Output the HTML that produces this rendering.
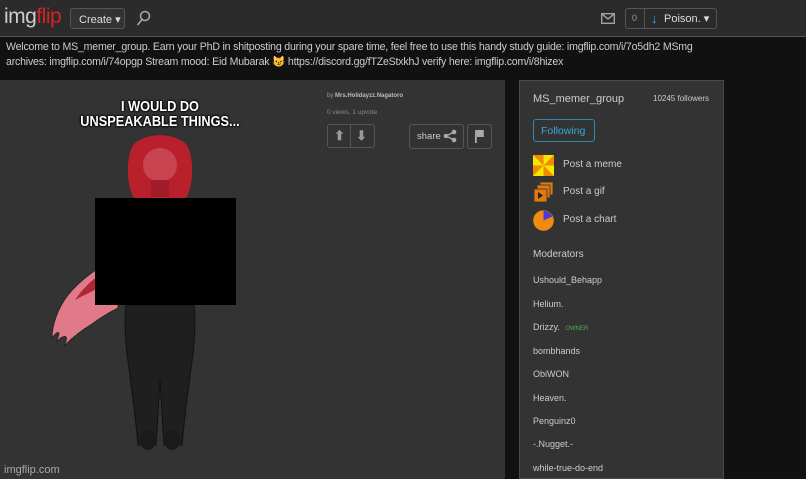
<!DOCTYPE html>
<html><head><meta charset="utf-8"><style>
*{margin:0;padding:0;box-sizing:border-box}
body{width:806px;height:479px;background:#111;font-family:"Liberation Sans",sans-serif;position:relative;overflow:hidden;color:#ddd}
.top{position:absolute;left:0;top:0;width:806px;height:37px;background:#2b2b2b;border-bottom:1px solid #555}
.abs{position:absolute}
.desc{position:absolute;left:6px;top:40px;font-size:10.6px;line-height:15px;color:#ccc;width:720px;letter-spacing:-0.2px}
.main{position:absolute;left:0;top:80px;width:505px;height:399px;background:#333}
.side{position:absolute;left:519px;top:80px;width:205px;height:399px;background:#333;border:1px solid #4a4a4a}
.btn{position:absolute;border:1px solid #555;border-radius:3px}
.mod{position:absolute;left:13px;font-size:9px;color:#ccc}
</style></head><body>
<div class="top">
 <div class="abs" style="left:4px;top:5px;font-size:21px;color:#ccc;letter-spacing:-0.5px">img<span style="color:#d2232a">flip</span></div>
 <div class="btn" style="left:70px;top:8px;width:55px;height:21px;background:#333;font-size:11px;color:#ddd;padding:4px 0 0 8px">Create ▾</div>
 <svg class="abs" style="left:136px;top:10px" width="16" height="17"><circle cx="9" cy="6" r="4.5" fill="none" stroke="#aaa" stroke-width="1.5"/><line x1="6" y1="9.5" x2="1.5" y2="15" stroke="#aaa" stroke-width="1.5"/></svg>
 <svg class="abs" style="left:601px;top:13px" width="14" height="11"><rect x="0.7" y="0.7" width="12.6" height="9.6" fill="none" stroke="#aaa" stroke-width="1.3"/><path d="M1 1 L7 6 L13 1" fill="none" stroke="#aaa" stroke-width="1.3"/></svg>
 <div class="btn" style="left:625px;top:8px;width:92px;height:21px;background:#2b2b2b"></div>
 <div class="abs" style="left:644px;top:8px;width:1px;height:21px;background:#555"></div>
 <div class="abs" style="left:632px;top:13px;font-size:9px;color:#999">0</div>
 <div class="abs" style="left:651px;top:11px;font-size:13px;color:#3ba3e0;font-weight:bold">↓</div>
 <div class="abs" style="left:664px;top:12px;font-size:11px;color:#ddd">Poison. ▾</div>
</div>
<div class="desc">Welcome to MS_memer_group. Earn your PhD in shitposting during your spare time, feel free to use this handy study guide: imgflip.com/i/7o5dh2 MSmg archives: imgflip.com/i/74opgp Stream mood: Eid Mubarak <span style="color:#e8b630">😼</span> https://discord.gg/fTZeStxkhJ verify here: imgflip.com/i/8hizex</div>
<div class="main">
 <svg class="abs" style="left:0;top:0" width="300" height="399">
  <path d="M118 178 C100 185 80 200 68 215 C58 228 52 245 52 258 C58 250 62 250 56 262 C64 254 70 254 64 266 C74 256 82 250 92 244 C100 238 110 232 118 228 Z" fill="#e07a88" stroke="#222" stroke-width="0.8"/>
  <path d="M118 185 C100 192 85 205 75 220 C90 212 105 205 118 200Z" fill="#b02838"/>
  <path d="M133 65 C126 78 126 105 134 118 L186 118 C194 105 194 78 187 65 C175 52 145 52 133 65Z" fill="#b8212c"/>
  <ellipse cx="160" cy="85" rx="17" ry="17" fill="#c84450"/>
  <rect x="151" y="100" width="18" height="18" fill="#a01c28"/>
  <path d="M128 125 C128 115 192 115 192 125 L192 118 L128 118Z" fill="#c03a44"/>
  <path d="M126 225 L194 225 C198 260 188 300 184 345 L182 365 L164 365 L160 300 L156 365 L138 365 L136 345 C132 300 122 260 126 225Z" fill="#1f1f20" stroke="#111" stroke-width="1"/>
  <ellipse cx="148" cy="360" rx="8" ry="10" fill="#1a1a1a"/><ellipse cx="172" cy="360" rx="8" ry="10" fill="#1a1a1a"/>
 </svg>
 <div class="abs" style="left:95px;top:118px;width:141px;height:107px;background:#000"></div>
 <div class="abs" style="left:40px;top:19px;width:240px;text-align:center;font-family:'Liberation Sans Narrow','Liberation Sans',sans-serif;font-weight:bold;font-size:15px;line-height:15px;color:#fff;text-shadow:0 0 3px #000,0 0 3px #000,0 0 2px #000;transform:scaleX(0.85)">I WOULD DO<br>UNSPEAKABLE THINGS...</div>
 <div class="abs" style="left:4px;top:384px;font-size:11px;color:#aaa">imgflip.com</div>
 <div class="abs" style="left:327px;top:13px;font-size:6px;color:#999">by <b style="color:#bbb">Mrs.Holidayzz.Nagatoro</b></div>
 <div class="abs" style="left:327px;top:29px;font-size:6.5px;color:#888">0 views, 1 upvote</div>
 <div class="btn" style="left:327px;top:44px;width:48px;height:24px"></div>
 <div class="abs" style="left:350px;top:44px;width:1px;height:24px;background:#555"></div>
 <div class="abs" style="left:334px;top:48px;font-size:13px;color:#999;font-weight:bold">⬆</div>
 <div class="abs" style="left:356px;top:48px;font-size:13px;color:#999;font-weight:bold">⬇</div>
 <div class="btn" style="left:409px;top:44px;width:55px;height:25px;font-size:9.5px;color:#ccc;padding:6px 0 0 7px">share</div>
 <svg class="abs" style="left:443px;top:49px" width="14" height="14"><circle cx="11" cy="3" r="2.3" fill="#aaa"/><circle cx="3" cy="7" r="2.3" fill="#aaa"/><circle cx="11" cy="11" r="2.3" fill="#aaa"/><path d="M11 3 L3 7 L11 11" stroke="#aaa" fill="none" stroke-width="1.3"/></svg>
 <div class="btn" style="left:467px;top:44px;width:25px;height:25px"></div>
 <svg class="abs" style="left:475px;top:50px" width="10" height="13"><rect x="0" y="0" width="1.8" height="13" fill="#aaa"/><rect x="1.8" y="0" width="7" height="7" fill="#aaa"/></svg>
</div>
<div class="side">
 <div class="abs" style="left:13px;top:12px;font-size:11px;color:#ccc">MS_memer_group</div>
 <div class="abs" style="left:133px;top:13px;font-size:8px;color:#ccc">10245 followers</div>
 <div class="btn" style="left:13px;top:38px;width:62px;height:23px;border-color:#2a8ab0;font-size:10.5px;color:#3aa8d8;padding:5px 0 0 7px">Following</div>
 <svg class="abs" style="left:13px;top:74px" width="21" height="21"><rect width="21" height="21" fill="#f5e800"/><path d="M10.5 10.5 L0 0 L10.5 0Z M10.5 10.5 L21 10.5 L21 0Z M10.5 10.5 L21 21 L10.5 21Z M10.5 10.5 L0 10.5 L0 21Z" fill="#f08a00"/></svg>
 <div class="abs" style="left:43px;top:78px;font-size:10px;color:#ccc">Post a meme</div>
 <svg class="abs" style="left:13px;top:101px" width="21" height="21"><rect x="7" y="0" width="13" height="13" fill="#e07a10" stroke="#333" stroke-width="0.8"/><rect x="4" y="3" width="13" height="13" fill="#e07a10" stroke="#333" stroke-width="0.8"/><rect x="1" y="7" width="13" height="13" fill="#e07a10" stroke="#333" stroke-width="0.8"/><path d="M5 10 L10 13.5 L5 17Z" fill="#222"/></svg>
 <div class="abs" style="left:43px;top:105px;font-size:10px;color:#ccc">Post a gif</div>
 <svg class="abs" style="left:13px;top:129px" width="21" height="21"><circle cx="10.5" cy="10.5" r="10.3" fill="#f08a10"/><path d="M10.5 10.5 L10.5 0.5 A10 10 0 0 1 19.5 6.5Z" fill="#4a3ad8"/></svg>
 <div class="abs" style="left:43px;top:133px;font-size:10px;color:#ccc">Post a chart</div>
 <div class="abs" style="left:13px;top:168px;font-size:10px;color:#ccc">Moderators</div>
 <div class="mod" style="top:194px">Ushould_Behapp</div>
 <div class="mod" style="top:218px">Helium.</div>
 <div class="mod" style="top:241px">Drizzy. <span style="color:#4caf50;font-size:6px;margin-left:3px">OWNER</span></div>
 <div class="mod" style="top:265px">bombhands</div>
 <div class="mod" style="top:288px">ObiWON</div>
 <div class="mod" style="top:312px">Heaven.</div>
 <div class="mod" style="top:335px">Penguinz0</div>
 <div class="mod" style="top:358px">-.Nugget.-</div>
 <div class="mod" style="top:382px">while-true-do-end</div>
</div>
</body></html>
